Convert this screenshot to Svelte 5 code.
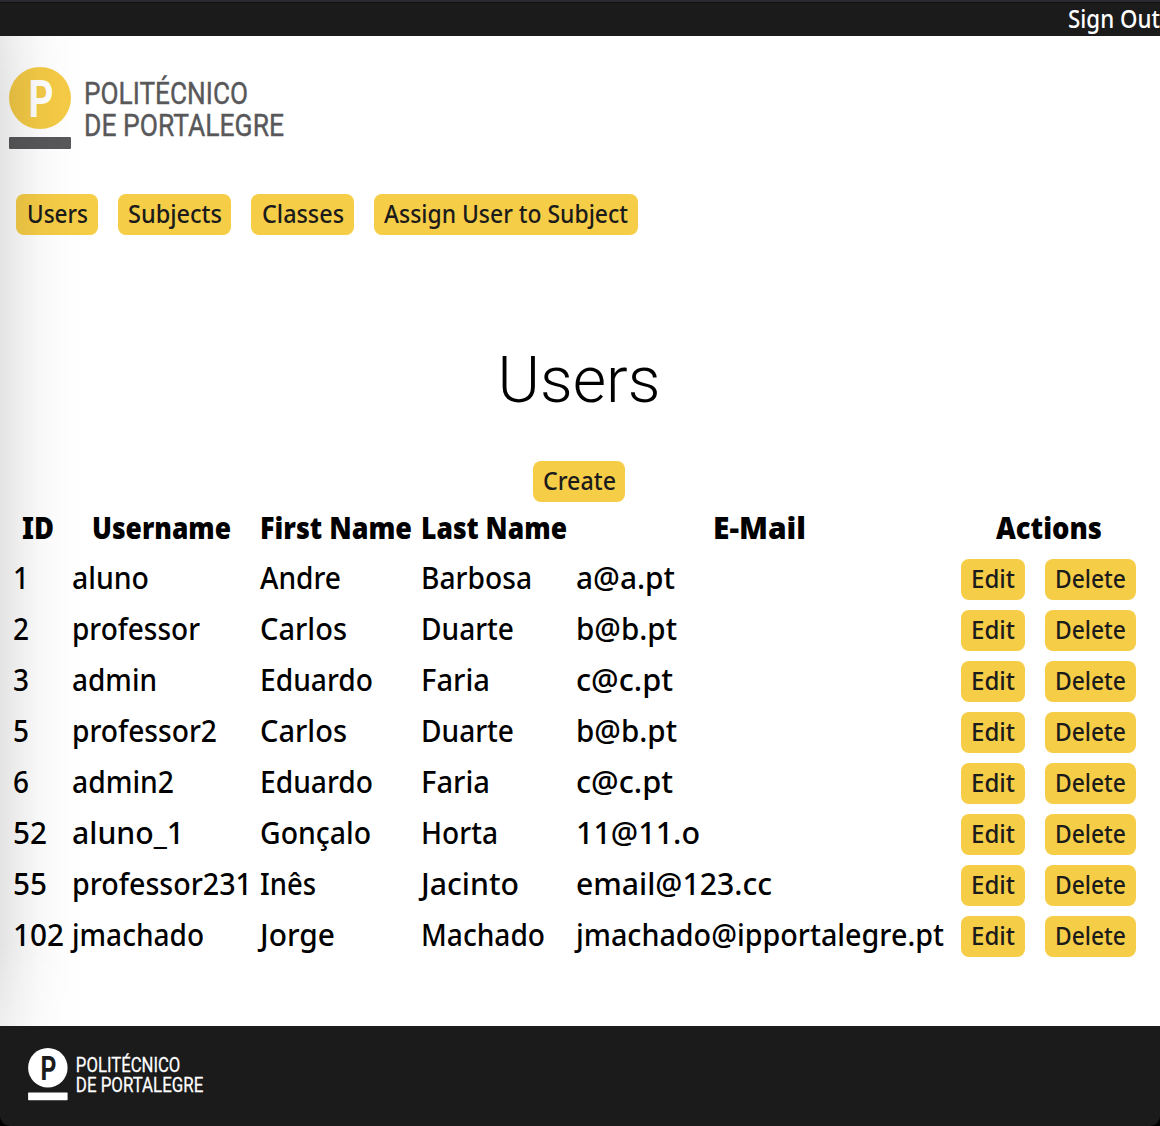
<script>
  const nav = [
    ['Users', 82, 61],
    ['Subjects', 113, 94],
    ['Classes', 103, 82],
    ['Assign User to Subject', 264, 244],
  ];
  // Each text is paired with the width it is set to.
  const headings = [
    ['ID', 32], ['Username', 139], ['First Name', 152],
    ['Last Name', 146], ['E-Mail', 93], ['Actions', 106],
  ];
  const rows = [
    [['1', 16], ['aluno', 77], ['Andre', 81], ['Barbosa', 111], ['a@a.pt', 99]],
    [['2', 16], ['professor', 128], ['Carlos', 87], ['Duarte', 93], ['b@b.pt', 101]],
    [['3', 16], ['admin', 85], ['Eduardo', 113], ['Faria', 69], ['c@c.pt', 97]],
    [['5', 16], ['professor2', 145], ['Carlos', 87], ['Duarte', 93], ['b@b.pt', 101]],
    [['6', 16], ['admin2', 102], ['Eduardo', 113], ['Faria', 69], ['c@c.pt', 97]],
    [['52', 34], ['aluno_1', 112], ['Gonçalo', 111], ['Horta', 77], ['11@11.o', 124]],
    [['55', 34], ['professor231', 180], ['Inês', 56], ['Jacinto', 98], ['email@123.cc', 196]],
    [['102', 51], ['jmachado', 132], ['Jorge', 75], ['Machado', 124], ['jmachado@ipportalegre.pt', 368]],
  ];
</script>

{#snippet label(text, width)}
  <svg class="label" {width} height="41"><text y="29" textLength={width} lengthAdjust="spacingAndGlyphs">{text}</text></svg>
{/snippet}

{#snippet logo(cls)}
  <svg class="logo {cls}" viewBox="0 0 276 84">
    <circle class="disc" cx="31" cy="31" r="31" />
    <text class="p" x="19.5" y="49.5" textLength="25" lengthAdjust="spacingAndGlyphs">P</text>
    <rect class="base" y="70" width="62" height="12" rx="1" />
    <text class="name" x="75" y="37" textLength="164" lengthAdjust="spacingAndGlyphs">POLITÉCNICO</text>
    <text class="name" x="75" y="69" textLength="200" lengthAdjust="spacingAndGlyphs">DE PORTALEGRE</text>
  </svg>
{/snippet}

<div class="page">
  <header class="topbar">{@render label('Sign Out', 92)}</header>
  <div class="brand">{@render logo('color')}</div>
  <nav>
    {#each nav as [text, box, w]}
      <button style:width="{box}px">{@render label(text, w)}</button>
    {/each}
  </nav>
  <main>
    <h1>Users</h1>
    <button class="create">{@render label('Create', 73)}</button>
    <div class="table">
      <div class="row head">
        {#each headings as [text, w]}
          <div class="cell">{@render label(text, w)}</div>
        {/each}
      </div>
      {#each rows as row}
        <div class="row">
          {#each row as [text, w]}
            <div class="cell">{@render label(text, w)}</div>
          {/each}
          <div class="cell actions">
            <button class="edit">{@render label('Edit', 44)}</button>
            <button class="delete">{@render label('Delete', 71)}</button>
          </div>
        </div>
      {/each}
    </div>
  </main>
  <footer>{@render logo('mono')}</footer>
  <div class="shade"></div>
</div>

<style>
  :global(body) { margin: 0; background: #000; }
  .page {
    position: relative;
    box-sizing: border-box;
    width: 1160px;
    height: 1126px;
    display: flex;
    flex-direction: column;
    overflow: hidden;
    background: #fff;
    font-family: "Noto Sans", sans-serif;
    font-weight: 500;
    color: #000;
  }
  .label { display: block; flex: none; overflow: visible; font-size: 24.5px; fill: currentColor; }
  .topbar {
    box-sizing: border-box;
    height: 36px;
    flex: none;
    display: flex;
    justify-content: flex-end;
    background: #1b1b1b;
    border-top: 2px solid #2b2a33;
    box-shadow: inset 0 1px #101010;
    color: #fff;
  }
  .topbar .label { margin-top: -3px; }
  .brand { height: 158px; flex: none; box-sizing: border-box; padding: 31px 0 0 9px; }
  .logo { display: block; overflow: visible; }
  .color { width: 276px; height: 84px; }
  .mono { width: 176px; height: 53.5px; }
  .name { font: 400 32px Roboto, sans-serif; stroke-width: 0.4px; }
  .p { font: 700 52px Roboto, sans-serif; }
  .color .disc { fill: #f5cb46; }
  .color .p { fill: #fff; }
  .color .base, .color .name { fill: #58585a; }
  .color .name { stroke: #58585a; }
  .mono .disc, .mono .base, .mono .name { fill: #fff; }
  .mono .name { stroke: #fff; }
  .mono .p { fill: #1b1b1b; }
  nav { display: flex; gap: 20px; padding-left: 16px; }
  button {
    display: flex;
    justify-content: center;
    height: 41px;
    padding: 0;
    border: 0;
    border-radius: 8px;
    background: #f6cd47;
    color: #1b1b1b;
    font: inherit;
  }
  main { flex: 1; display: flex; flex-direction: column; }
  h1 { margin: 108px 0 0; height: 75px; padding-right: 2px; text-align: center; font: 300 64.5px/75px Roboto, sans-serif; }
  .create { width: 92px; margin: 43px 0 0 533px; }
  .table { padding-left: 13px; }
  .row {
    display: grid;
    grid-template-columns: 50px 178px 152px 145.5px 367.5px 192px;
    column-gap: 9.4px;
    height: 51px;
    align-items: center;
  }
  .head { height: 52px; font-weight: 900; }
  .head .cell { display: flex; justify-content: center; }
  .cell .label { font-size: 30.5px; }
  .cell .label text { transform: translateY(0.8px); }
  .head .label text { transform: translateY(1.5px); }
  .actions { display: flex; gap: 20px; padding-left: 8px; }
  .actions .label { font-size: 24.5px; }
  .actions .label text { transform: none; }
  .edit { width: 64px; }
  .delete { width: 91px; }
  footer {
    box-sizing: border-box;
    height: 100px;
    flex: none;
    padding: 22px 0 0 28px;
    background: #1b1b1b;
    border-radius: 0 0 10px 10px;
    box-shadow: 0 10px 0 #000;
  }
  .shade {
    position: absolute;
    inset: 36px auto 100px 0;
    width: 84px;
    background: linear-gradient(90deg, rgba(0,0,0,.11), rgba(0,0,0,.075) 15px, rgba(0,0,0,.028) 40px, rgba(0,0,0,.008) 62px, transparent);
    -webkit-mask-image: linear-gradient(rgba(0,0,0,.8), #000 60px, #000 calc(100% - 80px), rgba(0,0,0,.6));
    mask-image: linear-gradient(rgba(0,0,0,.8), #000 60px, #000 calc(100% - 80px), rgba(0,0,0,.6));
    pointer-events: none;
  }
</style>
